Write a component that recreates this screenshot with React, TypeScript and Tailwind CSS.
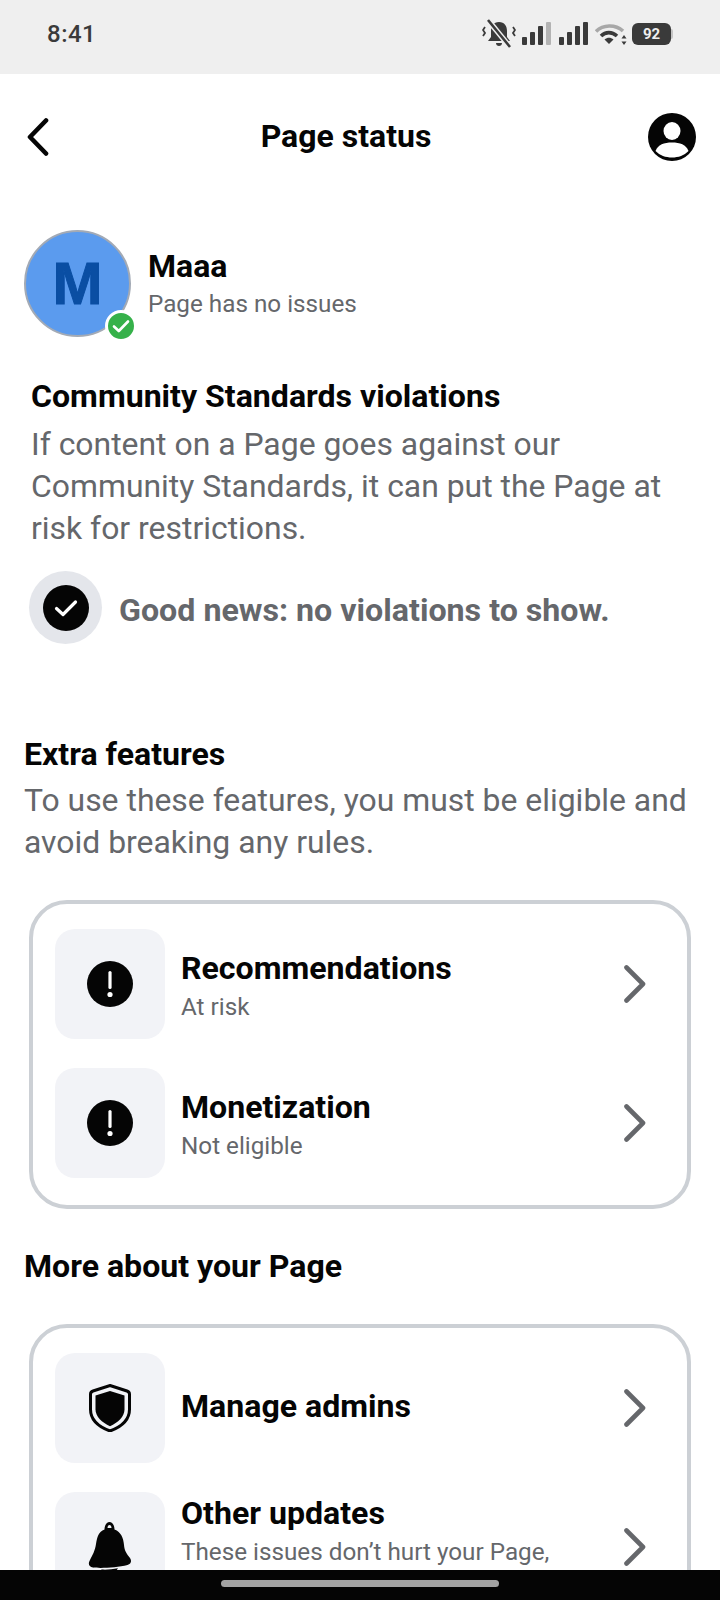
import type { ReactNode } from "react";

const Chevron = () => (
  <svg width="24" height="40" viewBox="0 0 24 40" fill="none" className="shrink-0">
    <path d="M4.500 3.500 21 20 4.500 36.500" stroke="#65676b" strokeWidth="4.6" strokeLinecap="round" strokeLinejoin="round" />
  </svg>
);

const AlertIcon = () => (
  <svg width="46" height="46" viewBox="0 0 46 46">
    <circle cx="23" cy="23" r="23" fill="#050505" />
    <rect x="21.400" y="10" width="3.200" height="18" rx="1.600" fill="#fff" />
    <circle cx="23" cy="33.5" r="2.6" fill="#fff" />
  </svg>
);

const ShieldIcon = () => (
  <svg width="42" height="48" viewBox="0 0 42 48">
    <path
      d="M21 1.500 38 7c1.600.5 2.500 1.700 2.500 3.300v15C40.500 36 32 43 21 47 10 43 1.500 36 1.500 25.300v-15C1.500 8.700 2.400 7.500 4 7Z"
      fill="none"
      stroke="#050505"
      strokeWidth="3"
    />
    <path d="M21 7 35.500 11.500v13.800C35.500 33 29 38.500 21 42.200 13 38.500 6.500 33 6.500 25.300V11.500Z" fill="#050505" />
  </svg>
);

const BellIcon = () => (
  <svg width="44" height="52" viewBox="0 0 44 52">
    <path
      d="M16.500 8.500C16.500 4 19 1 21.500 1s5 3 5 7.500C33 11 35.500 17 36 24c.4 6 3 9 6 13 2 3 1 6-2.500 7C29 46.500 13 47.500 5 46.500 1 46 0 43 1.500 40 4.500 34 7 30 8 23c1-7 2.500-12 8.500-14.500Z"
      fill="#050505"
    />
    <path d="M19.500 7c0-2 1-3 2-3s2 1 2 3Z" fill="#f2f3f7" />
    <path d="M13 48.500c5 .4 11 0 17-1.200-1.500 3-4.500 4.700-8 4.700s-7-1.300-9-3.500Z" fill="#050505" />
  </svg>
);

type RowProps = { icon: ReactNode; title: string; sub?: string; clipped?: boolean };

const Row = ({ icon, title, sub, clipped }: RowProps) => {
  // clipped: the sub text runs on to a line that the nav bar covers
  const textBox = clipped
    ? "ml-[16px] min-w-0 flex-1 pb-[32px]"
    : sub
      ? "ml-[16px] min-w-0 flex-1 pt-[4px]"
      : "ml-[16px] min-w-0 flex-1 pb-[5px]";
  return (
    <div className="flex items-center">
      <div className="flex h-[110px] w-[110px] shrink-0 items-center justify-center rounded-[20px] bg-[#f2f3f7]">
        {icon}
      </div>
      <div className={textBox}>
        <div className="text-[32.1px] leading-[38px] font-bold text-[#050505]">{title}</div>
        {sub && <div className="mt-[3px] text-[24.25px] leading-[34px] text-[#65676b]">{sub}</div>}
      </div>
      <div className="mr-[41px] flex">
        <Chevron />
      </div>
    </div>
  );
};

const Card = ({ children }: { children: ReactNode }) => (
  <div className="mx-[29px] flex flex-col gap-[29px] rounded-[38px] border-4 border-[#ccd0d5] pt-[25px] pb-[27px] pl-[22px]">
    {children}
  </div>
);

const SignalBars = ({ dimLast }: { dimLast?: boolean }) => (
  <svg width="30" height="24" viewBox="0 0 30 24">
    <rect x="0" y="15" width="5" height="8" rx="1" fill="#3a3a3a" />
    <rect x="8" y="10" width="5" height="13" rx="1" fill="#3a3a3a" />
    <rect x="16" y="4" width="5" height="19" rx="1" fill="#3a3a3a" />
    <rect x="24" y="0" width="5" height="23" rx="1" fill={dimLast ? "#b3b3b3" : "#3a3a3a"} />
  </svg>
);

const StatusIcons = () => (
  <div className="flex items-center">
    <svg width="34" height="30" viewBox="0 0 34 30" className="mr-[6px]">
      <path d="M17 3c5.500 0 8 4 8 9v6l3 4H6l3-4v-6c0-5 2.500-9 8-9Z" fill="#3a3a3a" />
      <path d="M14 24h6c0 2-1.300 3-3 3s-3-1-3-3Z" fill="#3a3a3a" />
      <path d="M6 1 28 28" stroke="#efefef" strokeWidth="5.500" />
      <path d="M6 1 28 28" stroke="#3a3a3a" strokeWidth="2.600" />
      <path d="M3 8 1 11l2 3-2 3" fill="none" stroke="#3a3a3a" strokeWidth="1.800" />
      <path d="M31 8l2 3-2 3 2 3" fill="none" stroke="#3a3a3a" strokeWidth="1.800" />
    </svg>
    <SignalBars dimLast />
    <div className="w-[7px]" />
    <SignalBars />
    <svg width="32" height="24" viewBox="0 0 32 24" className="ml-[6px]">
      <path d="M1 9.500C8 2.500 20 2 28 9" fill="none" stroke="#a8a8a8" strokeWidth="3.600" />
      <path d="M6 14c4.500-4.500 11-4.500 16 0" fill="none" stroke="#3a3a3a" strokeWidth="3.600" />
      <path d="M9.500 17.500c3-2.500 6-2.500 9 0L14 22Z" fill="#3a3a3a" />
      <path d="M29 13l-2.500 3.500h5ZM29 23l-2.500-3.500h5Z" fill="#3a3a3a" />
    </svg>
    <div className="ml-[5px] flex h-[22px] w-[39px] items-center justify-center rounded-[6px] bg-[#3a3a3a] text-[15px] leading-none font-bold text-[#efefef]">
      92
    </div>
    <div className="h-[10px] w-[2px] rounded-r-sm bg-[#c4c4c4]" />
  </div>
);

export default function App() {
  return (
    <div className="relative h-[1600px] w-[720px] overflow-hidden bg-white font-['Roboto',sans-serif]">
      {/* status bar */}
      <div className="flex h-[74px] items-center justify-between bg-[#efefef] pr-[47px] pb-[6px] pl-[47px]">
        <span className="text-[24px] leading-none font-medium tracking-[0.5px] text-[#3a3a3a]">8:41</span>
        <StatusIcons />
      </div>

      {/* header */}
      <div className="relative flex h-[125px] items-center justify-between pr-[24px] pl-[27px]">
        <svg width="24" height="38" viewBox="0 0 24 38" fill="none">
          <path d="M19 2.500 3 19l16 16.500" stroke="#050505" strokeWidth="4.600" strokeLinecap="round" strokeLinejoin="round" />
        </svg>
        <div className="absolute inset-x-0 top-[44px] ml-[-28px] text-center text-[32px] leading-[36px] font-bold text-[#050505]">
          Page status
        </div>
        <svg width="48" height="48" viewBox="0 0 48 48">
          <circle cx="24" cy="24" r="24" fill="#050505" />
          <ellipse cx="24" cy="18" rx="8.500" ry="9" fill="#fff" />
          <path d="M7.500 38C10 31.500 16 29.500 24 29.500S38 31.500 40.500 38C36 42.500 30.500 44.500 24 44.500S12 42.500 7.500 38Z" fill="#fff" />
        </svg>
      </div>

      {/* page identity */}
      <div className="mt-[31px] flex items-center pl-[24px]">
        <div className="relative h-[107px] w-[107px] shrink-0">
          <div className="flex h-full w-full items-center justify-center rounded-full border-2 border-[#a3aab5] bg-[#5b9bee] font-['Liberation_Sans',sans-serif] text-[60px] leading-none font-bold text-[#0a4ea3] [-webkit-text-stroke:1px_#0a4ea3]">
            M
          </div>
          <div className="absolute top-[80px] left-[81px] flex h-[32px] w-[32px] items-center justify-center rounded-full border-[3px] border-white bg-[#36b14a]">
            <svg width="18" height="14" viewBox="0 0 18 14" fill="none">
              <path d="M2 7.500 6.800 12 16 2.500" stroke="#fff" strokeWidth="2.600" strokeLinecap="round" strokeLinejoin="round" />
            </svg>
          </div>
        </div>
        <div className="ml-[17px] pt-[3px]">
          <div className="text-[32px] leading-[38px] font-bold text-[#050505]">Maaa</div>
          <div className="text-[24.25px] leading-[38px] text-[#65676b]">Page has no issues</div>
        </div>
      </div>

      {/* violations */}
      <div className="mt-[39px] pl-[31px]">
        <div className="text-[32.1px] leading-[40px] font-bold text-[#050505]">Community Standards violations</div>
        <p className="mt-[7px] w-[660px] text-[31.9px] leading-[42px] text-[#65676b]">
          If content on a Page goes against our Community Standards, it can put the Page at risk for restrictions.
        </p>
      </div>
      <div className="mt-[22px] flex items-center pl-[29px]">
        <div className="flex h-[73px] w-[73px] items-center justify-center rounded-full bg-[#e4e6eb]">
          <div className="flex h-[46px] w-[46px] items-center justify-center rounded-full bg-[#050505]">
            <svg width="24" height="18" viewBox="0 0 24 18" fill="none">
              <path d="M2.500 9.500 9 15.500 21.500 3" stroke="#fff" strokeWidth="3.200" strokeLinecap="round" strokeLinejoin="round" />
            </svg>
          </div>
        </div>
        <span className="ml-[17px] pt-[4px] text-[32.2px] leading-[40px] font-bold text-[#65676b]">
          Good news: no violations to show.
        </span>
      </div>

      {/* extra features */}
      <div className="mt-[90px] pl-[24px]">
        <div className="text-[32.1px] leading-[40px] font-bold text-[#050505]">Extra features</div>
        <p className="mt-[5px] w-[680px] text-[31.9px] leading-[42px] text-[#65676b]">
          To use these features, you must be eligible and avoid breaking any rules.
        </p>
      </div>
      <div className="mt-[37px]">
        <Card>
          <Row icon={<AlertIcon />} title="Recommendations" sub="At risk" />
          <Row icon={<AlertIcon />} title="Monetization" sub="Not eligible" />
        </Card>
      </div>

      <div className="mt-[37px] pl-[24px] text-[32.1px] leading-[40px] font-bold text-[#050505]">More about your Page</div>
      <div className="mt-[38px]">
        <Card>
          <Row icon={<ShieldIcon />} title="Manage admins" />
          <Row icon={<BellIcon />} title="Other updates" sub="These issues don’t hurt your Page," clipped />
        </Card>
      </div>

      {/* nav bar */}
      <div className="absolute inset-x-0 bottom-0 flex h-[30px] items-start justify-center bg-[#050505] pt-[10px]">
        <div className="h-[7px] w-[278px] rounded-full bg-[#a3a3a3]" />
      </div>
    </div>
  );
}
